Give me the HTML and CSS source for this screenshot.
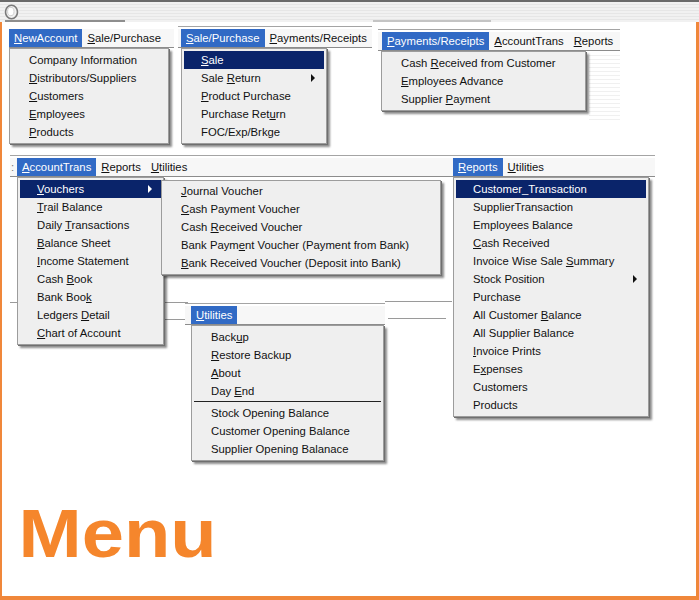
FILE: index.html
```html
<!DOCTYPE html>
<html lang="en">
<head>
<meta charset="utf-8">
<title>Menu</title>
<link rel="stylesheet" href="styles.css">
</head>
<body>
<div class="window">
  <div class="titlebar">
    <svg class="sysicon" width="15" height="16" viewBox="0 0 15 16">
      <ellipse cx="7.5" cy="8" rx="6" ry="6.8" fill="#f2f2f2" stroke="#7a7a7a" stroke-width="1.6"/>
      <ellipse cx="6.8" cy="7.5" rx="3.2" ry="4.2" fill="#ffffff" stroke="#c4c4c4" stroke-width="0.8"/>
    </svg>
    <span class="tb-frag tb-frag-a"></span>
    <span class="tb-frag tb-frag-b"></span>
  </div>
  <div class="frame">
    <div class="canvas">

      <span class="bgline bl-1"></span>
      <span class="bgline bl-2"></span>
      <span class="bgline bl-3"></span>
      <span class="bgline bl-4"></span>
      <span class="stripes st-1"></span>

      <!-- NewAccount -->
      <div class="shot s1">
        <div class="menubar">
          <span class="mb-item active"><u>N</u>ewAccount</span>
          <span class="mb-item"><u>S</u>ale/Purchase</span>
        </div>
        <div class="dropdown">
          <div class="item">Company Information</div>
          <div class="item"><u>D</u>istributors/Suppliers</div>
          <div class="item"><u>C</u>ustomers</div>
          <div class="item"><u>E</u>mployees</div>
          <div class="item"><u>P</u>roducts</div>
        </div>
      </div>

      <!-- Sale/Purchase -->
      <div class="shot s2">
        <div class="menubar">
          <span class="mb-item active"><u>S</u>ale/Purchase</span>
          <span class="mb-item"><u>P</u>ayments/Receipts</span>
        </div>
        <div class="dropdown">
          <div class="item hl"><u>S</u>ale</div>
          <div class="item sub">Sale <u>R</u>eturn</div>
          <div class="item"><u>P</u>roduct Purchase</div>
          <div class="item">Purchase Ret<u>u</u>rn</div>
          <div class="item">FOC/Exp/Brkge</div>
        </div>
      </div>

      <!-- Payments/Receipts -->
      <div class="shot s3">
        <div class="menubar">
          <span class="mb-item active"><u>P</u>ayments/Receipts</span>
          <span class="mb-item"><u>A</u>ccountTrans</span>
          <span class="mb-item"><u>R</u>eports</span>
        </div>
        <div class="dropdown">
          <div class="item">Cash <u>R</u>eceived from Customer</div>
          <div class="item"><u>E</u>mployees Advance</div>
          <div class="item">Supplier <u>P</u>ayment</div>
        </div>
      </div>

      <!-- AccountTrans -->
      <div class="shot s4">
        <div class="menubar">
          <span class="mb-frag">:</span>
          <span class="mb-item active"><u>A</u>ccountTrans</span>
          <span class="mb-item"><u>R</u>eports</span>
          <span class="mb-item"><u>U</u>tilities</span>
        </div>
        <div class="dropdown">
          <div class="item hl sub"><u>V</u>ouchers</div>
          <div class="item"><u>T</u>rail Balance</div>
          <div class="item">Daily <u>T</u>ransactions</div>
          <div class="item"><u>B</u>alance Sheet</div>
          <div class="item"><u>I</u>ncome Statement</div>
          <div class="item">Cash <u>B</u>ook</div>
          <div class="item">Bank Boo<u>k</u></div>
          <div class="item">Ledgers <u>D</u>etail</div>
          <div class="item"><u>C</u>hart of Account</div>
        </div>
        <div class="dropdown submenu">
          <div class="item"><u>J</u>ournal Voucher</div>
          <div class="item"><u>C</u>ash Payment Voucher</div>
          <div class="item">Cash <u>R</u>eceived Voucher</div>
          <div class="item">Bank Paym<u>e</u>nt Voucher (Payment from Bank)</div>
          <div class="item"><u>B</u>ank Received Voucher (Deposit into Bank)</div>
        </div>
      </div>

      <!-- Reports -->
      <div class="shot s5">
        <div class="menubar">
          <span class="mb-item active"><u>R</u>eports</span>
          <span class="mb-item"><u>U</u>tilities</span>
        </div>
        <div class="dropdown">
          <div class="item hl">Customer_Transaction</div>
          <div class="item">SupplierTransaction</div>
          <div class="item">Employees Balance</div>
          <div class="item"><u>C</u>ash Received</div>
          <div class="item">Invoice Wise Sale <u>S</u>ummary</div>
          <div class="item sub">Stock Position</div>
          <div class="item">Purchase</div>
          <div class="item">All Customer <u>B</u>alance</div>
          <div class="item">All Supplier Balance</div>
          <div class="item"><u>I</u>nvoice Prints</div>
          <div class="item">E<u>x</u>penses</div>
          <div class="item">Customers</div>
          <div class="item">Products</div>
        </div>
      </div>

      <!-- Utilities -->
      <div class="shot s6">
        <div class="menubar">
          <span class="mb-item active"><u>U</u>tilities</span>
        </div>
        <div class="dropdown">
          <div class="item">Back<u>u</u>p</div>
          <div class="item"><u>R</u>estore Backup</div>
          <div class="item"><u>A</u>bout</div>
          <div class="item">Day <u>E</u>nd</div>
          <div class="sep"></div>
          <div class="item">Stock Opening Balance</div>
          <div class="item">Customer Opening Balance</div>
          <div class="item">Supplier Opening Balanace</div>
        </div>
      </div>

    </div>
    <div class="caption">Menu</div>
  </div>
</div>
</body>
</html>
```

FILE: styles.css
```css
* { box-sizing: border-box; }

html, body {
  margin: 0;
  padding: 0;
  background: #ffffff;
}

.window {
  width: 699px;
  height: 600px;
  overflow: hidden;
  background: #ffffff;
  font-family: "Liberation Sans", Tahoma, Arial, sans-serif;
  display: flex;
  flex-direction: column;
}

.titlebar {
  position: relative;
  height: 22px;
  flex: none;
  border-top: 2px solid #6a6a6a;
  background: repeating-linear-gradient(180deg, #f1f1f1 0, #f1f1f1 2px, #e6e6e6 2px, #e6e6e6 3px);
  padding: 2px 0 0 4px;
}

.sysicon { display: block; }

.tb-frag {
  position: absolute;
  bottom: 0;
  height: 2px;
}
.tb-frag-a { left: 5px; width: 120px; background: #8e8e8e; }
.tb-frag-b { left: 373px; width: 118px; background: #c4c4c4; }

.frame {
  flex: 1;
  display: flex;
  flex-direction: column;
  border-left: 2px solid #f0873a;
  border-right: 3px solid #f0873a;
  border-bottom: 4px solid #f0873a;
}

.canvas {
  position: relative;
  height: 474px;
  flex: none;
}

/* ---------- background fragments of the screenshots ---------- */
.bgline {
  position: absolute;
  height: 1px;
  background: #9a9a9a;
}
.bl-1 { left: 8px; top: 280px; width: 178px; }
.bl-2 { left: 160px; top: 297px; width: 28px; }
.bl-3 { left: 383px; top: 279px; width: 67px; }
.bl-4 { left: 386px; top: 296px; width: 58px; }

.stripes {
  position: absolute;
  background: repeating-linear-gradient(180deg, #ffffff 0, #ffffff 3px, #f0f0f0 3px, #f0f0f0 4px);
}
.st-1 { left: 587px; top: 30px; width: 31px; height: 68px; }

/* ---------- one screenshot of a menu ---------- */
.shot {
  position: absolute;
  border-top: 1px solid #a4a4a4;
  padding-top: 2px;
  font-size: 11.3px;
  color: #111111;
}

.s1 { left: 7px;   top: 4px;   width: 165px; border-top-color: transparent; --pad: 0px; --dd: 0px; --ddw: 160px; }
.s2 { left: 176px; top: 4px;   width: 194px; --pad: 3px; --dd: 3px; --ddw: 146px; }
.s3 { left: 376px; top: 7px;   width: 242px; --pad: 4px; --dd: 3px; --ddw: 205px; }
.s4 { left: 8px;   top: 133px; width: 442px; --pad: 0px; --dd: 7px; --ddw: 147px; }
.s5 { left: 450px; top: 133px; width: 203px; --pad: 1px; --dd: 1px; --ddw: 196px; }
.s6 { left: 183px; top: 281px; width: 200px; --pad: 6px; --dd: 6px; --ddw: 193px; }

.menubar {
  display: flex;
  height: 19px;
  padding-left: var(--pad);
  background: #f7f7f7;
  border-bottom: 1px solid #8c8c8c;
}

.mb-item {
  padding: 0 5px;
  line-height: 18px;
  white-space: nowrap;
}
.mb-item.active {
  background: #316ac5;
  color: #ffffff;
}
.mb-frag {
  width: 7px;
  line-height: 18px;
  color: #777777;
  padding-left: 1px;
}

.dropdown {
  position: relative;
  margin-left: var(--dd);
  width: var(--ddw);
  background: #efefef;
  border: 1px solid #9c9c9c;
  padding: 2px;
  box-shadow: 1px 1px 0 #6f6f6f, 3px 3px 2px rgba(0, 0, 0, 0.45);
}

.submenu {
  position: absolute;
  left: 151px;
  top: 24px;
  width: 280px;
  margin-left: 0;
  padding-top: 1px;
}

.item {
  position: relative;
  height: 18px;
  line-height: 18px;
  padding-left: 17px;
  white-space: nowrap;
}
.item.hl {
  background: #0a246a;
  color: #ffffff;
}
.item.sub::after {
  content: "";
  position: absolute;
  right: 9px;
  top: 5px;
  border-left: 4px solid currentColor;
  border-top: 4px solid transparent;
  border-bottom: 4px solid transparent;
}

.sep {
  height: 1px;
  margin: 1px 0 2px;
  background: #222222;
}

u { text-underline-offset: 1px; }

/* ---------- slide caption ---------- */
.caption {
  padding: 3px 0 0 15px;
  font-family: "Liberation Sans", Arial, sans-serif;
  font-weight: 700;
  font-size: 69px;
  line-height: 69px;
  color: #f5862c;
  transform: scaleX(1.1);
  transform-origin: 0 0;
}
```
